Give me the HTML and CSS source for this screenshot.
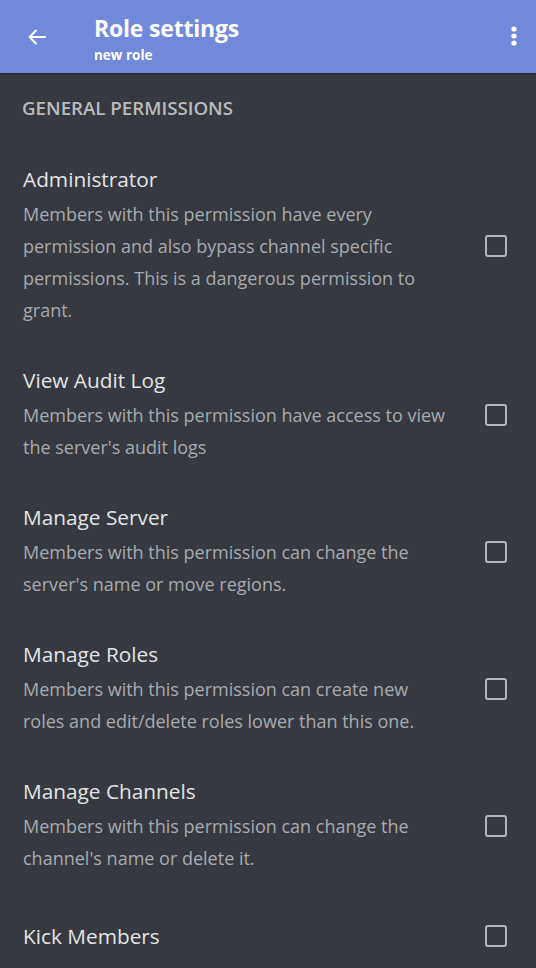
FILE: index.html
```html
<!DOCTYPE html>
<html lang="en">
<head>
<meta charset="utf-8">
<title>Role settings</title>
<link rel="stylesheet" href="styles.css">
</head>
<body>
<header class="appbar">
  <button class="icon-btn back" aria-label="Back">
    <svg width="24" height="24" viewBox="0 0 24 24"><path d="M20 12H5M11 5.5L4.5 12l6.5 6.5" fill="none" stroke="#fff" stroke-width="2" stroke-linecap="round" stroke-linejoin="round"/></svg>
  </button>
  <div class="titles">
    <div class="title">Role settings</div>
    <div class="subtitle">new role</div>
  </div>
  <button class="icon-btn more" aria-label="More">
    <svg width="8" height="24" viewBox="0 0 8 24"><circle cx="4" cy="5" r="2.6" fill="#fff"/><circle cx="4" cy="12" r="2.6" fill="#fff"/><circle cx="4" cy="19" r="2.6" fill="#fff"/></svg>
  </button>
</header>
<main class="content">
  <h2 class="section">GENERAL PERMISSIONS</h2>
  <ul class="perms">
    <li class="perm">
      <div class="text">
        <div class="name">Administrator</div>
        <div class="desc">Members with this permission have every permission and also bypass channel specific permissions. This is a dangerous permission to grant.</div>
      </div>
      <span class="check"></span>
    </li>
    <li class="perm">
      <div class="text">
        <div class="name">View Audit Log</div>
        <div class="desc">Members with this permission have access to view the server's audit logs</div>
      </div>
      <span class="check"></span>
    </li>
    <li class="perm">
      <div class="text">
        <div class="name">Manage Server</div>
        <div class="desc">Members with this permission can change the server's name or move regions.</div>
      </div>
      <span class="check"></span>
    </li>
    <li class="perm">
      <div class="text">
        <div class="name">Manage Roles</div>
        <div class="desc">Members with this permission can create new roles and edit/delete roles lower than this one.</div>
      </div>
      <span class="check"></span>
    </li>
    <li class="perm">
      <div class="text">
        <div class="name">Manage Channels</div>
        <div class="desc">Members with this permission can change the channel's name or delete it.</div>
      </div>
      <span class="check"></span>
    </li>
    <li class="perm single">
      <div class="text">
        <div class="name">Kick Members</div>
      </div>
      <span class="check"></span>
    </li>
  </ul>
</main>
</body>
</html>
```

FILE: styles.css
```css
* { box-sizing: border-box; }
html, body {
  margin: 0;
  padding: 0;
  background: #36393f;
  height: 100%;
  overflow: hidden;
}
body {
  font-family: "Open Sans", "Noto Sans", sans-serif;
  color: #dcddde;
}
.appbar {
  height: 73px;
  background: #7089d8;
  display: flex;
  align-items: center;
  padding: 0 14px 0 25px;
  box-shadow: 0 1px 2px rgba(0,0,0,0.35);
  position: relative;
}
.icon-btn {
  background: none;
  border: 0;
  padding: 0;
  display: flex;
  align-items: center;
  justify-content: center;
  cursor: pointer;
}
.back { width: 24px; height: 24px; }
.titles {
  flex: 1;
  margin-left: 45px;
  display: flex;
  flex-direction: column;
  color: #fff;
  margin-top: 4px;
}
.title {
  font-size: 23px;
  font-weight: 700;
  line-height: 30px;
  letter-spacing: -0.2px;
}
.subtitle {
  font-size: 13.5px;
  font-weight: 700;
  line-height: 18px;
  margin-top: 3px;
}
.more { width: 16px; height: 24px; margin-top: -2px; }
.content {
  padding: 0 29px 0 23px;
}
.section {
  margin: 0 0 0 -1px;
  padding-top: 23px;
  font-size: 18.7px;
  font-weight: 600;
  line-height: 24px;
  color: #b9bbbe;
}
.perms {
  list-style: none;
  margin: 0;
  padding: 0;
  padding-top: 45px;
}
.perm {
  display: flex;
  align-items: center;
  gap: 37px;
  margin-bottom: 40px;
}
.perm.single { margin-top: 48px; }
.perm:nth-last-child(2) { margin-bottom: 0; }
.text { flex: 1; }
.name {
  font-size: 20.8px;
  line-height: 28px;
  color: #e3e4e6;
  margin-bottom: 5px;
}
.single .name { margin-bottom: 0; }
.desc {
  font-size: 18px;
  line-height: 32px;
  color: #a7aaae;
}
.check {
  flex: none;
  width: 22px;
  height: 22px;
  border: 2px solid #b4b6b9;
  border-radius: 3px;
}
```
